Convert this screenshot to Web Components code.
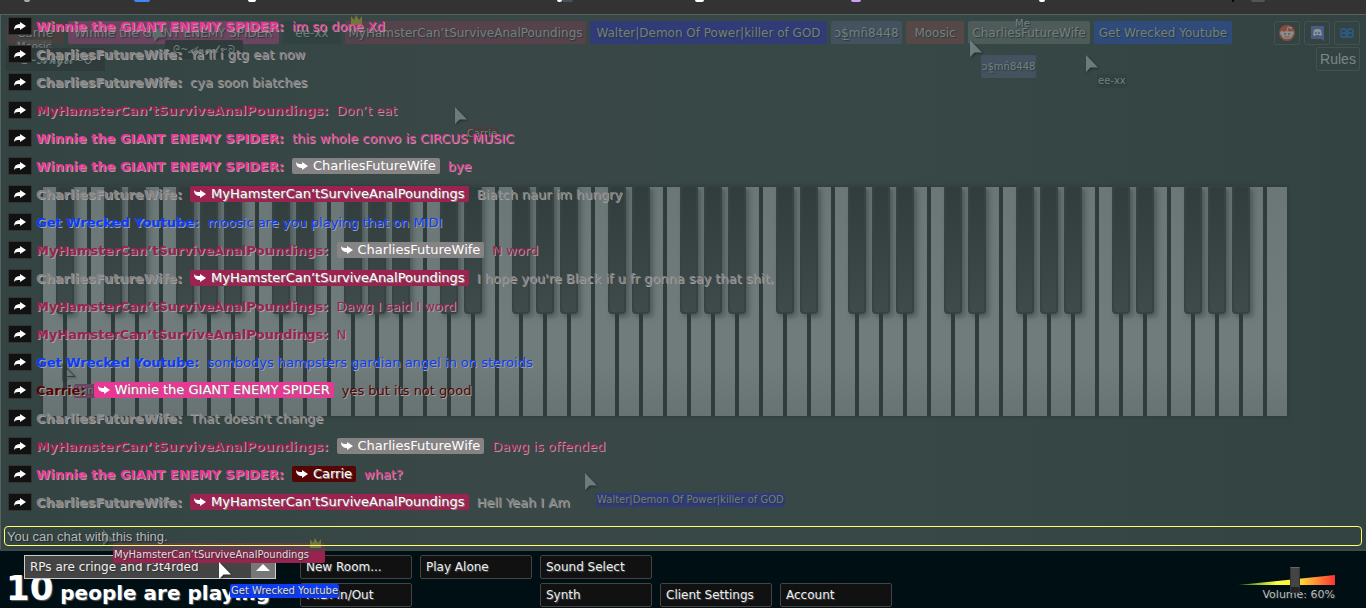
<!DOCTYPE html>
<html lang="en">
<head>
<meta charset="utf-8">
<title>Multiplayer Piano</title>
<style>
html, body { margin: 0; height: 100%; }
body { background: #000f14; font-family: "DejaVu Sans", Verdana, sans-serif; font-size: 13px; overflow: hidden; }
</style>
</head>
<body>
<piano-app></piano-app>
<script>
const define = (name, css, html) => customElements.define(name, class extends HTMLElement {
  constructor() {
    super();
    this.attachShadow({ mode: 'open' }).innerHTML = `<style>*{box-sizing:border-box}${css}</style>` + (typeof html === 'function' ? html(this) : html);
  }
});
const ARROW = 'M0 9Q0 3 6 3V1L12 5 6 9V7H4Q1 7 0 9z';

define('browser-edge', `
:host{display:block;height:14px;background:#333;position:relative;overflow:hidden}
i{position:absolute;top:0;height:2px;border-radius:0 0 4px 4px}`,
  [[24, 6, '#aaa'], [134, 16, '#4285f4'], [248, 8, '#fff'], [557, 5, '#fff'], [562, 11, '#46545a'], [695, 9, '#fff'], [851, 10, '#cfa0f5'], [1039, 6, '#fff'], [1232, 2, '#000'], [1251, 14, '#555']]
    .map(([x, w, c]) => `<i style="left:${x}px;width:${w}px;background:${c}"></i>`).join(''));

define('piano-keys', `
:host{display:block;padding:0 79px 0 42px}
.row{display:flex;gap:4px;height:229px;background:#2f3c3c;box-shadow:0 0 3px 1px #2f3c3c}
.w{flex:1;position:relative;background:linear-gradient(#6a7776,#6f7c7b 60%,#6f7c7b 78%,#667372)}
.b{position:absolute;z-index:1;top:-1px;right:-11px;width:18px;height:128px;border:2px solid #364342;border-top-width:1px;border-radius:2px 2px 4px 4px;background:linear-gradient(#303d3c,#3f4a4a);box-shadow:3px 3px 5px #2f3c3c88}`,
  '<div class="row">' + Array.from({ length: 52 }, (_, i) =>
    `<div class="w">${i < 51 && [0, 2, 3, 5, 6].includes(i % 7) ? '<div class="b"></div>' : ''}</div>`).join('') + '</div>');

define('user-tag', `
:host{display:block;box-sizing:border-box;height:23px;line-height:24px;border-radius:2px;font-size:12px;color:#728080;text-shadow:1px 1px 1px #2a3838;text-align:center;white-space:nowrap;background:var(--bg)}
:host([mini]){height:14px;line-height:14px;font-size:10px;padding:0 1px;text-align:left}`, '<slot></slot>');

define('mouse-cursor', `
:host{display:block;width:15px;height:20px}
svg{display:block;filter:drop-shadow(1px 1px 1px #0006)}`,
  el => `<svg width="15" height="20" viewBox="0 0 15 20" aria-hidden="true"><path d="M1 1V18L5.500 13.500H13Z" fill="${el.getAttribute('fill') || '#6d7b7a'}" stroke="${el.getAttribute('stroke') || 'none'}"/></svg>`);

define('crown-icon', `:host{display:block}svg{display:block}`,
  '<svg width="13" height="11" viewBox="0 0 13 11" aria-hidden="true"><path d="M1 1l3 4 2-5 3 5 3-4v9H1z" fill="#74773c"/></svg>');

define('social-button', `
:host{display:block}
button{display:grid;place-items:center;width:26px;height:24px;padding:0;border:1px solid #455050;border-radius:2px;background:none}`,
  el => {
    const art = {
      reddit: '<circle cx="9" cy="9" r="8" fill="#8a4c39"/><circle cx="4" cy="9" r="2" fill="#839090"/><circle cx="14" cy="9" r="2" fill="#839090"/><ellipse cx="9" cy="11" rx="5.500" ry="4" fill="#839090"/><path d="M9 7l1-4 3 1" fill="none" stroke="#839090"/><circle cx="13" cy="4" r="1" fill="#839090"/><circle cx="7" cy="10" r="1" fill="#8a4c39"/><circle cx="11" cy="10" r="1" fill="#8a4c39"/><path d="M6.500 12.500q2.500 1.500 5 0" fill="none" stroke="#8a4c39"/>',
      discord: '<path d="M3 2h12q1 0 1 1v14l-3-2H4q-1 0-1-1z" fill="#4c5c80"/><path d="M6 6l2-1h3l2 1 1 5-2 1-1-1H8l-1 1-2-1z" fill="#8a9696"/><circle cx="8" cy="9" r="1" fill="#4c5c80"/><circle cx="11" cy="9" r="1" fill="#4c5c80"/>',
      bb: '<path d="M8 5H4.500Q3 5 3 7T4.500 9H8M4.500 9Q3 9 3 11T4.500 13H8V5M10 5h3.500q1.500 0 1.500 2T13.500 9H10M13.500 9Q15 9 15 11t-1.500 2H10V5" fill="none" stroke="#2e587b" stroke-width="2"/>'
    }[el.getAttribute('kind')];
    return `<button aria-label="${el.getAttribute('kind')}"><svg width="18" height="18" viewBox="0 0 18 18">${art}</svg></button>`;
  });

define('room-stage', `
:host{display:grid;grid-template:auto/100%;position:relative;border:1px solid #56625f;border-width:1px 0 0 1px;
background:linear-gradient(90deg,#334443,#394847 35%,#384847 65%,#334342);}
.top{grid-area:1/1;display:flex;justify-content:space-between;padding:6px 6px 0 5px;align-items:flex-start}
.tags{display:flex;gap:4px}
.tools{display:grid;grid-template-columns:repeat(3,auto);gap:2px 4px;justify-items:end}
.rules{grid-column:1/4;width:44px;height:24px;padding:0;border:1px solid #455050;border-radius:2px;background:none;color:#7b8787;font:14px "Liberation Sans",sans-serif}
piano-keys{grid-area:1/1;margin-top:172px}
chat-log{grid-area:1/1;position:relative;z-index:3}
.free{position:absolute;z-index:2}`,
  `<div class="top"><div class="tags">
  <user-tag style="--bg:#47403f;width:58px">Carrie</user-tag>
  <user-tag style="--bg:#6b4560;width:211px">Winnie the GIANT ENEMY SPIDER</user-tag>
  <user-tag style="--bg:#314341;width:58px">ee-xx</user-tag>
  <user-tag style="--bg:#56424b;width:241px">MyHamsterCan’tSurviveAnalPoundings</user-tag>
  <user-tag style="--bg:#303b78;width:237px">Walter|Demon Of Power|killer of GOD</user-tag>
  <user-tag style="--bg:#44525f;width:71px">ↄ$̲mn̑8448</user-tag>
  <user-tag style="--bg:#574848;width:58px">Moosic</user-tag>
  <user-tag style="--bg:#4e5b59;width:122px">CharliesFutureWife</user-tag>
  <user-tag style="--bg:#2f4b7b;width:138px">Get Wrecked Youtube</user-tag>
  </div><div class="tools"><social-button kind="reddit"></social-button><social-button kind="discord"></social-button><social-button kind="bb"></social-button><button class="rules">Rules</button></div></div>
  <piano-keys></piano-keys>
  <user-tag class="free" mini style="--bg:#4b4b4b;left:15px;top:25px">Moosic</user-tag>
  <user-tag class="free" mini style="--bg:#303c3b;left:5px;top:33px;width:99px;height:23px;line-height:24px;font-size:12px;text-align:center">ᘓ~𝓐𝓷𝓰𝓮𝓵~ᘐ</user-tag>
  <user-tag class="free" mini style="--bg:#303c3b;left:164px;top:25px;width:78px;height:19px;line-height:19px;text-align:center">ᘓ~𝓐𝓷𝓰𝓮𝓵~ᘐ</user-tag>
  <mouse-cursor class="free" style="left:152px;top:9px" fill="#5b6d69"></mouse-cursor>
  <crown-icon class="free" style="left:349px;top:0"></crown-icon>
  <mouse-cursor class="free" style="left:453px;top:91px"></mouse-cursor>
  <user-tag class="free" mini style="--bg:#463f3e;left:465px;top:112px">Carrie</user-tag>
  <mouse-cursor class="free" style="left:968px;top:24px"></mouse-cursor>
  <user-tag class="free" mini style="left:1013px;top:2px">Me</user-tag>
  <user-tag class="free" mini style="--bg:#44525f;left:980px;top:40px;height:23px;line-height:24px">ↄ$̰mn̑8448</user-tag>
  <mouse-cursor class="free" style="left:1084px;top:39px"></mouse-cursor>
  <user-tag class="free" mini style="--bg:#314341;left:1096px;top:59px">ee-xx</user-tag>
  <mouse-cursor class="free" style="left:61px;top:348px" fill="none" stroke="#303d3c"></mouse-cursor>
  <user-tag class="free" mini style="--bg:#6b4560;left:73px;top:369px;width:24px;overflow:hidden">Winnie</user-tag>
  <mouse-cursor class="free" style="left:583px;top:457px"></mouse-cursor>
  <user-tag class="free" mini style="--bg:#303b78;left:595px;top:478px">Walter|Demon Of Power|killer of GOD</user-tag>
  <mouse-cursor class="free" style="left:101px;top:513px" fill="#596766"></mouse-cursor>
  <chat-log></chat-log>`);

define('chat-line', `
:host{display:flex;align-items:center;height:28px;padding-left:4px;color:var(--c);white-space:nowrap;text-shadow:1px 1px 0 #a0a0a0}
button{width:24px;height:18px;padding:0;border:1px solid #333;border-radius:1px;background:#111;display:grid;place-items:center;margin-right:4px}
b{margin-right:8px}
.to{background:var(--t);color:#fff;height:16px;line-height:16px;padding:0 4px;border-radius:2px;margin-right:8px;text-shadow:1px 1px 0 #888;display:flex;align-items:center;gap:5px}`,
  el => {
    const to = el.getAttribute('to');
    return `<button aria-label="Reply"><svg width="12" height="10" viewBox="0 0 12 10"><path d="${ARROW}" fill="#fff"/></svg></button><b>${el.getAttribute('from')}:</b>${to ? `<span class="to" style="--t:${el.getAttribute('tone')}"><svg width="12" height="10" viewBox="0 0 12 10"><path transform="matrix(1 0 0 -1 0 10)" d="${ARROW}" fill="#fff"/></svg>${to}</span>` : ''}<slot></slot>`;
  });

const W = ['Winnie the GIANT ENEMY SPIDER', '#e83893'], C = ['CharliesFutureWife', '#858383'], M = ['MyHamsterCan’tSurviveAnalPoundings', '#9c2350'],
  G = ['Get Wrecked Youtube', '#0c3cf8'], R = ['Carrie', '#560505'];
const LOG = [[W, 'im so done Xd'], [C, 'Ya’ll i gtg eat now'], [C, 'cya soon biatches'], [M, 'Don’t eat'], [W, 'this whole convo is CIRCUS MUSIC'], [W, 'bye', C],
  [C, 'Biatch naur im hungry', M], [G, 'moosic are you playing that on MIDI'], [M, 'N word', C], [C, "I hope you're Black if u fr gonna say that shit,", M], [M, 'Dawg I said I word'], [M, 'N'],
  [G, 'sombodys hampsters gardian angel in on steroids'], [R, 'yes but its not good', W], [C, "That doesn't change"], [M, 'Dawg is offended', C], [W, 'what?', R], [C, 'Hell Yeah I Am', M]];

define('chat-log', `
:host{display:block;padding:0 4px 3px 3px;margin-top:-3px}
input{display:block;width:100%;height:20px;margin:10px 0 0;padding:0 2px;border:1px solid #ffff70;border-radius:4px;background:none;outline:0;font:13px "Liberation Sans",sans-serif;color:#a9b1b0;text-shadow:1px 1px 1px #222}
input::placeholder{color:#b1b9b8;opacity:1}`,
  LOG.map(([u, t, to]) => `<chat-line style="--c:${u[1]}" from="${u[0]}"${to ? ` to="${to[0]}" tone="${to[1]}"` : ''}>${t}</chat-line>`).join('') +
  '<input aria-label="Chat message" placeholder="You can chat with this thing.">');

define('ugly-button', `
:host{display:block}
button{display:block;width:100%;height:24px;padding:0 5px;border:1px solid #444;border-radius:2px;background:#111;color:#eee;font:12px "DejaVu Sans",sans-serif;text-align:left;text-shadow:1px 1px 1px #555}`,
  '<button><slot></slot></button>');

define('volume-slider', `
:host{display:grid;justify-items:end;align-content:start;position:relative;color:#b8bcbc;font-size:11px}
svg{display:block}
input{position:absolute;left:3px;top:-8px;width:97px;height:26px;margin:0;appearance:none;background:none}
input::-webkit-slider-thumb{appearance:none;width:10px;height:26px;background:linear-gradient(#444 0 78%,#222 78%);border:1px solid #333;border-top-color:#666}
label{line-height:14px;margin-top:3px;text-shadow:1px 1px 1px #333}`,
  `<svg width="97" height="10" viewBox="0 0 97 10" aria-hidden="true"><defs><linearGradient id="g"><stop offset="0" stop-color="#197d19"/><stop offset=".4" stop-color="#ff4"/><stop offset=".6" stop-color="#ffee33"/><stop offset="1" stop-color="#f33"/></linearGradient></defs><path d="M0 10 97 0V10z" fill="url(#g)"/></svg>
  <input id="v" type="range" min="0" max="100" value="60"><label for="v">Volume: 60%</label>`);

define('bottom-bar', `
:host{display:grid;grid-template-columns:252px 1fr 100px;position:relative;padding:4px 31px 0 24px;column-gap:24px;border-top:2px solid #3c4849;background:#000f14}
.room{position:relative;height:24px}
select{width:252px;height:24px;appearance:none;border:1px solid #ccc;background:#444;color:#eee;font:12px "DejaVu Sans",sans-serif;padding:0 5px;border-radius:0;text-shadow:1px 1px 1px #333;display:block}
.up{position:absolute;right:1px;top:1px;width:24px;height:22px;background:#777;display:grid;place-items:center;pointer-events:none}
.count{margin:-8px 0 0 -18px;color:#fff;font-weight:bold;font-size:20px;line-height:34px;white-space:nowrap;text-shadow:1px 1px 1px #666}
.count span{font-size:34px}
.btns{display:grid;grid-template-columns:repeat(5,112px);gap:4px 8px;align-content:start}
.btns>:nth-child(5){grid-column:3}
.btns>:nth-child(4){grid-column:1;grid-row:2}
volume-slider{margin-top:20px}
.free{position:absolute;z-index:2}`,
  `<div><div class="room"><select aria-label="Room"><option>RPs are cringe and r3t4rded</option></select><span class="up"><svg width="14" height="7"><path d="M0 7 7 0l7 7z" fill="#fff"/></svg></span></div><div class="count"><span>10</span> people are playing</div></div>
  <div class="btns"><ugly-button>New Room...</ugly-button><ugly-button>Play Alone</ugly-button><ugly-button>Sound Select</ugly-button><ugly-button>MIDI In/Out</ugly-button><ugly-button>Synth</ugly-button><ugly-button>Client Settings</ugly-button><ugly-button>Account</ugly-button></div>
  <volume-slider></volume-slider>
  <user-tag class="free" mini style="--bg:linear-gradient(#5b3f4d 0 8px,#98234f 8px);color:#ddd;left:113px;top:-8px;width:212px;height:20px;line-height:24px">MyHamsterCan’tSurviveAnalPoundings</user-tag>
  <crown-icon class="free" style="left:309px;top:-13px"></crown-icon>
  <mouse-cursor class="free" style="left:218px;top:10px" fill="#fff"></mouse-cursor>
  <user-tag class="free" mini style="--bg:#0c3cf8;color:#ddd;left:230px;top:33px">Get Wrecked Youtube</user-tag>`);

define('piano-app', ':host{display:block}', '<browser-edge></browser-edge><room-stage></room-stage><bottom-bar></bottom-bar>');
</script>
</body>
</html>
